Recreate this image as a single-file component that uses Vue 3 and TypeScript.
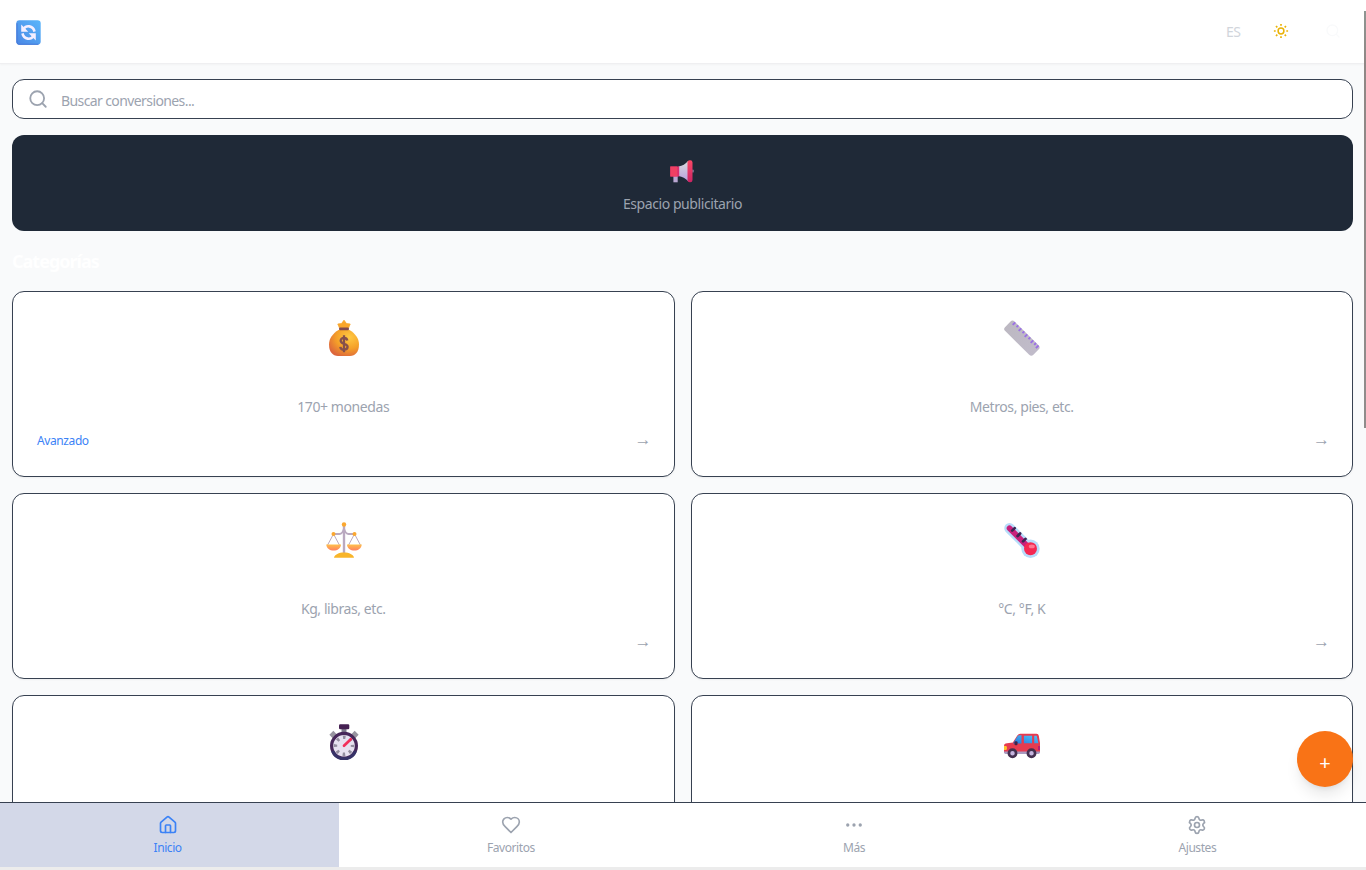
<script setup lang="ts">
interface Category { id: string; desc: string; advanced?: boolean }
interface Tab { id: string; label: string }

const categories: Category[] = [
  { id: 'money', desc: '170+ monedas', advanced: true },
  { id: 'ruler', desc: 'Metros, pies, etc.' },
  { id: 'scale', desc: 'Kg, libras, etc.' },
  { id: 'temp', desc: '°C, °F, K' },
  { id: 'time', desc: '' },
  { id: 'car', desc: '' },
]
const tabs: Tab[] = [
  { id: 'home', label: 'Inicio' },
  { id: 'heart', label: 'Favoritos' },
  { id: 'more', label: 'Más' },
  { id: 'settings', label: 'Ajustes' },
]
const active = 'home'
</script>

<template>
  <div class="page">
    <header class="header">
      <svg class="logo" viewBox="0 0 24 24">
        <defs>
          <linearGradient id="lg" x1="1" y1="0" x2="0" y2="1">
            <stop offset="0" stop-color="#5ab6fb" /><stop offset="1" stop-color="#4a86e4" />
          </linearGradient>
        </defs>
        <rect x=".3" y=".3" width="23.400" height="23.400" rx="3" fill="url(#lg)" />
        <path d="M.9 3v18a2 2 0 0 0 2 2.200H21.500" fill="none" stroke="#4478d8" stroke-width="1" />
        <g fill="none" stroke="#f5efff" stroke-width="2.500">
          <path d="M7.500 8.300C9.500 5 16.300 4.800 17.800 11.200" />
          <path d="M16.500 15.700C14.500 19 7.700 19.200 6.200 12.800" />
        </g>
        <path d="M5 4.400v6.800h6.800zM19 19.600v-6.800h-6.800z" fill="#f5efff" />
      </svg>
      <div class="actions">
        <span class="lang">ES</span>
        <svg class="sun" viewBox="0 0 16 16" fill="none" stroke="#eab308">
          <circle cx="8" cy="8" r="2.900" stroke-width="1.500" />
          <path stroke-width="1.700" d="M8 .9v1.800M8 13.300v1.800M.9 8h1.800M13.300 8h1.800M3 3l1.300 1.300M11.700 11.700 13 13M3 13l1.300-1.300M11.700 4.300 13 3" />
        </svg>
        <svg class="find" viewBox="0 0 24 24" fill="none" stroke="#f9fafb" stroke-width="2" stroke-linecap="round">
          <circle cx="11" cy="11" r="8" /><path d="m21 21-4.300-4.300" />
        </svg>
      </div>
    </header>

    <main class="content">
      <div class="search">
        <svg viewBox="0 0 24 24" fill="none" stroke="#9ca3af" stroke-width="2.200" stroke-linecap="round">
          <circle cx="11" cy="11" r="8.300" /><path d="m21.300 21.300-4.300-4.300" />
        </svg>
        <span>Buscar conversiones...</span>
      </div>

      <div class="ad">
        <svg viewBox="0 0 24 24">
          <defs>
            <linearGradient id="horn" x1="0" y1="0" x2="0" y2="1">
              <stop offset="0" stop-color="#d8dadd" /><stop offset="1" stop-color="#b99fdc" />
            </linearGradient>
            <linearGradient id="rim" x1="0" y1="0" x2="0" y2="1">
              <stop offset="0" stop-color="#fa4866" /><stop offset="1" stop-color="#cc2463" />
            </linearGradient>
          </defs>
          <path d="M3.400 16h4.300v6.300H3.400z" fill="#b9a7d2" />
          <circle cx="22.700" cy="11" r="1.500" fill="#6c6682" />
          <path d="M8.500 6.500c4-.5 7-2.500 9.500-5.500v20c-2.500-2.600-5.500-4.500-9.500-5z" fill="url(#horn)" />
          <path d="M.3 6.500h8.900v10H.3z" fill="#d92f70" />
          <path d="M.3 6.500h7v10h-7z" fill="#f04063" />
          <rect x="17.500" y=".2" width="5" height="22" rx="2.200" fill="url(#rim)" />
        </svg>
        <span>Espacio publicitario</span>
      </div>

      <h2>Categorías</h2>

      <div class="grid">
        <article v-for="c in categories" :key="c.id" class="card">
          <svg v-if="c.id === 'money'" class="emoji" viewBox="0 0 36 36">
            <defs>
              <radialGradient id="bag" cx=".68" cy=".28" r=".8">
                <stop offset="0" stop-color="#ffc943" /><stop offset=".55" stop-color="#f5a028" /><stop offset="1" stop-color="#dc653c" />
              </radialGradient>
            </defs>
            <path d="m13.500 8-1.700-4 3.700-.4L18 .2l2.500 3.400 3.700.4L22.500 8z" fill="#f9a62b" stroke="#f9a62b" stroke-width=".8" stroke-linejoin="round" />
            <path d="M12.500 10C7 13.500 3 18 3 24.500 3 32 6.800 36 12 36h12c5.200 0 9-4 9-11.500C33 18 29 13.500 23.500 10z" fill="url(#bag)" />
            <rect x="13" y="7.500" width="10" height="2.800" rx="1.200" fill="#81494e" />
            <path d="M21.300 20.500c-.3-1.700-1.400-2.500-3.300-2.500s-3.300.9-3.300 2.800c0 3.900 6.900 2.200 6.900 6 0 1.900-1.500 2.900-3.600 2.900-2 0-3.400-.9-3.700-2.900M18 15.300v17" fill="none" stroke="#86504b" stroke-width="2.300" />
          </svg>
          <svg v-else-if="c.id === 'ruler'" class="emoji" viewBox="0 0 36 36">
            <defs>
              <linearGradient id="rule" x1="0" y1="0" x2="1" y2="1">
                <stop offset="0" stop-color="#bcb8c1" /><stop offset="1" stop-color="#c1bccb" />
              </linearGradient>
            </defs>
            <path d="M1 7.200 6.500 1.500Q8.500-.3 10.500 1.500L34.800 25.500Q36.500 27.500 34.800 29.300L29.400 34.700Q27.300 36.600 25.200 34.700L1 10.800Q-.8 9 1 7.200Z" fill="url(#rule)" />
            <path d="m11.300 2.300-2.600 2.600M14.300 5.300l-1.800 1.800M17.300 8.300l-2.600 2.600M20.300 11.300l-1.800 1.800M23.300 14.300l-2.600 2.600M26.300 17.300l-1.800 1.800M29.300 20.300l-2.600 2.600M32 23l-1.800 1.800M34.500 25.500l-2.600 2.600" stroke="#9b70e5" stroke-width="1.900" />
          </svg>
          <svg v-else-if="c.id === 'scale'" class="emoji" viewBox="0 0 36 36">
            <defs>
              <linearGradient id="pan" x1="0" y1="0" x2="0" y2="1">
                <stop offset="0" stop-color="#ffc04a" /><stop offset="1" stop-color="#ff8060" />
              </linearGradient>
            </defs>
            <g fill="none" stroke="#baa9c0">
              <path d="M7.500 12h6q3 0 4.500-5.500 1.500 5.500 4.500 5.500h6" stroke-width="1.800" />
              <path d="M18 3v29" stroke-width="2.400" />
              <path d="M7.500 12 1.600 23M7.500 12l5.900 11M28.500 12l-5.900 11M28.500 12l5.900 11" stroke-width="1" />
            </g>
            <circle cx="18" cy="2.500" r="2.200" fill="#fba72f" />
            <circle cx="7.500" cy="12" r="2" fill="#fba72f" /><circle cx="28.500" cy="12" r="2" fill="#fba72f" />
            <path d="M.2 22.500h14.900c-.6 4-3.500 6-7.400 6s-6.900-2-7.500-6zM20.900 22.500h14.900c-.6 4-3.500 6-7.400 6s-6.900-2-7.500-6z" fill="url(#pan)" />
            <path d="M8 35.800c.5-3.300 5-5.300 10-5.300s9.500 2 10 5.300z" fill="#f8b52a" />
          </svg>
          <svg v-else-if="c.id === 'temp'" class="emoji" viewBox="0 -.7 36 36">
            <g fill="#b7dcfa">
              <path d="m5.500 5.500 21 21" stroke="#b7dcfa" stroke-width="10.500" stroke-linecap="round" />
              <circle cx="26.500" cy="26" r="9.200" />
            </g>
            <path d="m5.500 5.500 21 21" stroke="#c8207c" stroke-width="5.600" stroke-linecap="round" />
            <circle cx="26.500" cy="26" r="6.500" fill="#f52852" />
            <ellipse cx="27.800" cy="23.700" rx="3" ry="1.900" fill="#ff7791" />
            <path d="m8.200 7.900 2.500-2.500M13.600 13.300l2.500-2.500M19 18.700l2.500-2.500" stroke="#3b2452" stroke-width="2.700" stroke-linecap="round" />
          </svg>
          <svg v-else-if="c.id === 'time'" class="emoji" viewBox="0 0 36 36">
            <path d="m5 12.500 4-4M31 12.500l-4-4" stroke="#9895a0" stroke-width="4.600" />
            <path d="M15.500 3h5v6h-5z" fill="#7f7c8c" />
            <rect x="13" y=".2" width="10.300" height="5" rx="1.200" fill="#462153" />
            <circle cx="18" cy="21.800" r="12.400" fill="#e7e1f0" stroke="#472759" stroke-width="3.200" />
            <path d="M6.500 27a12.400 12.400 0 0 0 23 0" fill="none" stroke="#363267" stroke-width="3.200" />
            <circle cx="18" cy="21.800" r="8.500" fill="none" stroke="#938d9e" stroke-width="3.400" stroke-dasharray="2.600 4.076" stroke-dashoffset="1.300" />
            <path d="m18 21.800 6.800-6.600" stroke="#f22f5b" stroke-width="2.700" stroke-linecap="round" />
          </svg>
          <svg v-else class="emoji" viewBox="0 0 36 36">
            <defs>
              <linearGradient id="glass" x1="0" y1="1" x2="1" y2="0">
                <stop offset="0" stop-color="#2478db" /><stop offset="1" stop-color="#51c6fa" />
              </linearGradient>
            </defs>
            <path d="M0 24.500h36v3.800q0 1.700-1.700 1.700H1.700Q0 30 0 28.300z" fill="#a99ac0" />
            <path d="M0 22q0-2.500 3-2.700l5.800-.8 4.500-7q1.200-1.700 3-1.700h16.200q2 0 2.300 2L36 19v8.500H0z" fill="#e63b50" />
            <path d="m9 19.500 4.300-7q.8-1.200 2-1.200h2.200v8.200zM19.900 11.800h8.200v7.400h-8.200zM30.200 11.800h2.500l1.700 7.400h-4.200z" fill="url(#glass)" />
            <rect x="10.500" y="17.300" width="3" height="4" rx="1" fill="#452348" />
            <path d="M0 22h2q1 0 1 2t-1 2H0z" fill="#ffc52e" /><path d="M36 22h-2v4h2z" fill="#b81d75" />
            <g fill="#c6b5df" stroke="#44304f" stroke-width="2.700"><circle cx="8.500" cy="29.200" r="3.600" /><circle cx="27.500" cy="29.200" r="3.600" /></g>
          </svg>
          <p class="desc">{{ c.desc }}</p>
          <div v-if="c.desc" class="foot">
            <span class="advanced">{{ c.advanced ? 'Avanzado' : '' }}</span>
            <span class="arrow">→</span>
          </div>
        </article>
      </div>
    </main>

    <button class="fab" type="button">+</button>

    <nav class="nav">
      <div class="tabs">
        <div v-for="t in tabs" :key="t.id" class="tab" :class="{ active: t.id === active }">
          <svg viewBox="0 0 24 24" fill="none" stroke="currentColor" stroke-width="2" stroke-linecap="round" stroke-linejoin="round">
            <template v-if="t.id === 'home'">
              <path d="M15 21v-8a1 1 0 0 0-1-1h-4a1 1 0 0 0-1 1v8" />
              <path d="M3 10a2 2 0 0 1 .709-1.528l7-6a2 2 0 0 1 2.582 0l7 6A2 2 0 0 1 21 10v9a2 2 0 0 1-2 2H5a2 2 0 0 1-2-2z" />
            </template>
            <path v-else-if="t.id === 'heart'" d="M19 14c1.490-1.460 3-3.210 3-5.500A5.500 5.500 0 0 0 16.500 3c-1.760 0-3 .5-4.500 2-1.500-1.500-2.740-2-4.500-2A5.500 5.500 0 0 0 2 8.500c0 2.300 1.500 4.050 3 5.500l7 7Z" />
            <template v-else-if="t.id === 'more'">
              <circle cx="12" cy="12" r="1" /><circle cx="19.500" cy="12" r="1" /><circle cx="4.500" cy="12" r="1" />
            </template>
            <template v-else>
              <path d="M9.671 4.136a2.340 2.340 0 0 1 4.659 0 2.340 2.340 0 0 0 3.319 1.915 2.340 2.340 0 0 1 2.330 4.033 2.340 2.340 0 0 0 0 3.831 2.340 2.340 0 0 1-2.330 4.033 2.340 2.340 0 0 0-3.319 1.915 2.340 2.340 0 0 1-4.659 0 2.340 2.340 0 0 0-3.320-1.915 2.340 2.340 0 0 1-2.330-4.033 2.340 2.340 0 0 0 0-3.831A2.340 2.340 0 0 1 6.350 6.051a2.340 2.340 0 0 0 3.319-1.915" />
              <circle cx="12" cy="12" r="3" />
            </template>
          </svg>
          <span>{{ t.label }}</span>
        </div>
      </div>
    </nav>
    <div class="scroll-thumb"></div>
  </div>
</template>

<style>
html, body { margin: 0; overflow: hidden; }
</style>

<style scoped>
.page { position: relative; width: 1366px; height: 870px; overflow: hidden; background: #f9fafb; font-family: "Noto Sans", "Open Sans", sans-serif; font-size: 14px; display: flex; flex-direction: column; }
.page * { box-sizing: border-box; }
svg { display: block; flex: none; }
.header { height: 64px; flex: none; background: #fff; border-bottom: 1px solid #efeff1; box-shadow: 0 1px 2px rgba(0, 0, 0, .03); display: flex; align-items: center; justify-content: space-between; padding: 0 25px 0 16px; }
.logo { width: 25px; height: 25px; margin-top: 1px; }
.actions { display: flex; align-items: center; }
.lang { color: #d1d5db; font-size: 14px; letter-spacing: -.6px; width: 47px; }
.sun { width: 16px; height: 16px; margin-right: 36px; margin-top: -1px; }
.find { width: 16px; height: 16px; margin-top: -1px; }
.content { flex: 1; min-height: 0; overflow: hidden; padding: 15px 13px 0 12px; }
.search { height: 40px; border: 1px solid #374151; border-radius: 12px; background: #fff; display: flex; align-items: center; padding-left: 15px; gap: 13px; color: #9ca3af; }
.search svg { width: 20px; height: 20px; }
.search span { font-size: 14px; letter-spacing: -.6px; padding-top: 2px; }
.ad { height: 96px; margin-top: 16px; border-radius: 12px; background: #1f2937; display: flex; flex-direction: column; align-items: center; padding-top: 25px; color: #9ca3af; }
.ad svg { width: 24px; height: 24px; margin-right: 1px; }
.ad span { font-size: 14px; line-height: 20px; margin-top: 10px; letter-spacing: -.42px; }
h2 { margin: 16px 0; font-size: 18px; line-height: 28px; font-weight: 700; color: #fff; letter-spacing: -1px; }
.grid { display: grid; grid-template-columns: 1fr 1fr; gap: 16px; }
.card { height: 186px; background: #fff; border: 1px solid #374151; border-radius: 12px; padding: 28px 24px 0; display: flex; flex-direction: column; align-items: center; box-shadow: 0 1px 2px rgba(0, 0, 0, .05); }
.emoji { width: 36px; height: 36px; margin-left: 1px; }
.desc { margin: 41px 0 0; height: 20px; line-height: 20px; font-size: 14px; color: #9ca3af; letter-spacing: -.42px; }
.foot { width: 100%; margin-top: 11px; height: 24px; display: flex; align-items: center; justify-content: space-between; }
.advanced { font-size: 12px; color: #3b82f6; letter-spacing: -.4px; }
.arrow { font-family: "Liberation Sans", sans-serif; font-size: 17px; line-height: 20px; color: #9ca3af; margin-right: -2px; }
.fab { position: absolute; left: 1297px; top: 731px; width: 56px; height: 56px; padding: 7px 0 0; border: 0; border-radius: 50%; background: #f97316; color: #fff; font-family: "Noto Sans", sans-serif; font-size: 20px; line-height: 28px; box-shadow: 0 10px 15px -3px rgba(0, 0, 0, .1), 0 4px 6px -4px rgba(0, 0, 0, .1); }
.nav { flex: none; height: 68px; background: #fff; border-top: 1px solid #374151; border-bottom: 3px solid #ececec; overflow: hidden; }
.tabs { display: flex; margin: 0 -3px 0 -4px; height: 100%; }
.tab { flex: 1; display: flex; flex-direction: column; align-items: center; padding-top: 12px; color: #9ca3af; }
.tab.active { color: #3b82f6; background: #d3d8e8; }
.tab svg { width: 20px; height: 20px; }
.tab span { font-size: 12px; line-height: 16px; margin-top: 5px; letter-spacing: -.42px; }
.scroll-thumb { position: absolute; right: 0; top: 11px; width: 2px; height: 417px; background: linear-gradient(#8e9692, #8f8785 12%, #8f8c8b); }
</style>
